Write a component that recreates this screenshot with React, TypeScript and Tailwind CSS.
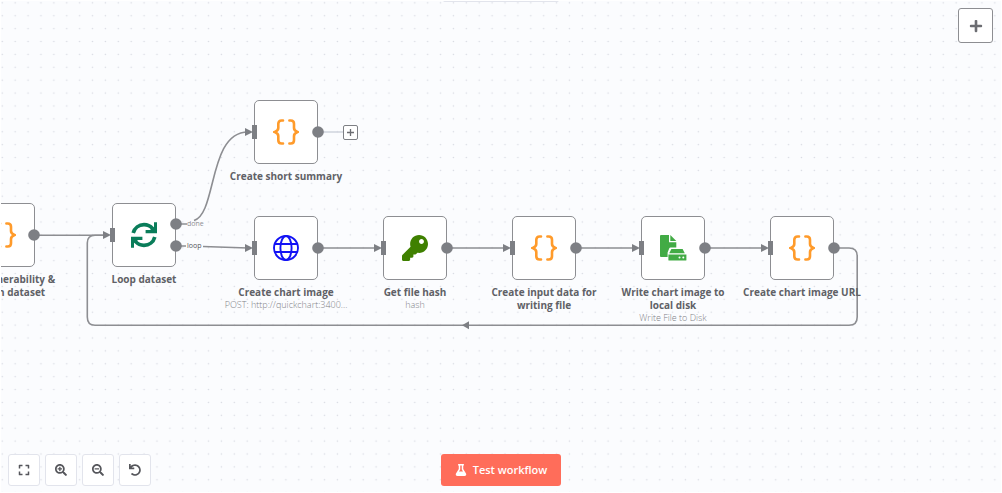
import type { ReactNode } from 'react';
import { FaExpand, FaFlask, FaKey, FaPlus, FaSearchMinus, FaSearchPlus, FaUndo } from 'react-icons/fa';

function BracesIcon() {
  return (
    <svg className="size-[26px]" viewBox="0 0 26 26" fill="none" stroke="#ff9b2b" strokeWidth="2.6" strokeLinecap="round" aria-hidden="true">
      <path d="M10 1.5H8.6Q5.3 1.5 5.3 4.8V9Q5.3 11.6 1.8 13Q5.3 14.4 5.3 17V21.2Q5.3 24.5 8.6 24.5H10" />
      <path d="M16.4 1.5H17.8Q21 1.5 21 4.8V9Q21 11.6 24.5 13Q21 14.4 21 17V21.2Q21 24.5 17.8 24.5H16.4" />
    </svg>
  );
}

function LoopIcon() {
  return (
    <svg className="size-[26px]" viewBox="0 0 26 26" fill="none" aria-hidden="true">
      <g stroke="#0a7d5a" strokeWidth="3.7">
        <path d="M2.2 11C3.6 5.8 7.9 2.7 13 2.7C16.6 2.7 19.4 4.1 21.6 6.6" />
        <path d="M23.8 15C22.4 20.2 18.1 23.3 13 23.3C9.4 23.3 6.6 21.9 4.4 19.4" />
      </g>
      <g fill="#0a7d5a">
        <path d="M23 0.2H26V11.2H14.6V8H19L23 4.8Z" />
        <path d="M3 25.8H0V14.8H11.4V18H7L3 21.2Z" />
      </g>
    </svg>
  );
}

function GlobeIcon() {
  return (
    <svg className="size-[26px]" viewBox="0 0 26 26" fill="none" stroke="#1212f5" strokeWidth="1.9" aria-hidden="true">
      <circle cx="13" cy="13" r="12" />
      <ellipse cx="13" cy="13" rx="5.6" ry="12" />
      <path d="M1.5 9H24.5M1.5 17H24.5" />
    </svg>
  );
}

function WriteFileIcon() {
  return (
    <svg className="h-[26px] w-[27px]" viewBox="0 0 27 26" fill="#42ab45" aria-hidden="true">
      <path d="M1 0H9V7.3H16.3V12.6H10.6Q9.6 12.6 9.2 13.5L7.6 17.6V22H1Q0 22 0 21V1Q0 0 1 0Z" />
      <path d="M10.3 0L16.3 6H10.3Z" />
      <path d="M11.4 14H22.6L24.8 18.3H9.2Z" />
      <path fillRule="evenodd" d="M8.4 19.6H26.4V25Q26.4 25.6 25.8 25.6H9Q8.4 25.6 8.4 25ZM19.5 21.6A1 1 0 1 0 19.5 23.6A1 1 0 1 0 19.5 21.6ZM23.3 21.6A1 1 0 1 0 23.3 23.6A1 1 0 1 0 23.3 21.6Z" />
    </svg>
  );
}

type WorkflowNode = {
  id: string;
  place: string;
  lines: string[];
  note?: string;
  icon: ReactNode;
};

const nodes: WorkflowNode[] = [
  { id: 'vulnerability', place: 'left-[-62px] top-[203px]', lines: ['Parse vulnerability &', 'common dataset'], icon: <BracesIcon /> },
  { id: 'loop', place: 'left-[79px] top-[203px]', lines: ['Loop dataset'], icon: <LoopIcon /> },
  { id: 'summary', place: 'left-[221px] top-[100px]', lines: ['Create short summary'], icon: <BracesIcon /> },
  { id: 'chart', place: 'left-[221px] top-[216px]', lines: ['Create chart image'], note: 'POST: http://quickchart:3400...', icon: <GlobeIcon /> },
  { id: 'hash', place: 'left-[350px] top-[216px]', lines: ['Get file hash'], note: 'hash', icon: <FaKey className="size-[26px] text-[#3f8000]" /> },
  { id: 'input', place: 'left-[479px] top-[216px]', lines: ['Create input data for', 'writing file'], icon: <BracesIcon /> },
  { id: 'write', place: 'left-[608px] top-[216px]', lines: ['Write chart image to', 'local disk'], note: 'Write File to Disk', icon: <WriteFileIcon /> },
  { id: 'url', place: 'left-[737px] top-[216px]', lines: ['Create chart image URL'], icon: <BracesIcon /> },
];

const inputs = [[112, 235], [254, 132], [254, 248], [383, 248], [512, 248], [641, 248], [770, 248]];
const outputs = [[34, 235], [176, 224], [176, 246], [318, 132], [318, 248], [447, 248], [576, 248], [705, 248], [834, 248]];

function Grid() {
  return (
    <svg className="absolute inset-0 size-full" aria-hidden="true">
      <defs>
        <pattern id="dots" x="-5.1" y="-4.6" width="12.89" height="12.89" patternUnits="userSpaceOnUse">
          <circle cx="6.4" cy="6.4" r="0.8" fill="#d9dbe3" />
        </pattern>
      </defs>
      <rect width="100%" height="100%" fill="url(#dots)" />
    </svg>
  );
}

function Edges() {
  return (
    <svg className="pointer-events-none absolute inset-0 size-full" fill="none" stroke="#8d8e92" strokeWidth="1.6" aria-hidden="true">
      <path d="M34 235.3H108" />
      <path d="M176 224H187M194 220.5C217 214 208 132 248 132" />
      <path d="M176 246H186M203 246.5L248 248" />
      <path d="M318 248H379M447 248H508M576 248H637M705 248H766" />
      <path d="M834 248H849Q857.2 248 857.2 256V317Q857.2 325.3 849 325.3H95Q87.3 325.3 87.3 317V243Q87.3 235.3 95 235.3H108" />
      <path d="M318 132H343" stroke="#d3d6df" />
      <path d="M469 321.3V329.3L462 325.3Z" fill="#7d7f84" stroke="none" />
    </svg>
  );
}

function Ports() {
  return (
    <svg className="pointer-events-none absolute inset-0 size-full" fill="#7d7f84" aria-hidden="true">
      {inputs.map(([x, y]) => (
        <g key={`${x}-${y}`}>
          <rect x={x - 2} y={y - 7} width="5" height="14" />
          <path d={`M${x - 9} ${y - 4}V${y + 4}L${x - 1} ${y}Z`} />
        </g>
      ))}
      {outputs.map(([x, y]) => (
        <circle key={`${x}-${y}`} cx={x} cy={y} r="5.8" />
      ))}
    </svg>
  );
}

function NodeCard({ node }: { node: WorkflowNode }) {
  return (
    <article className={`absolute flex w-[130px] flex-col items-center text-center ${node.place}`}>
      <div className="flex size-16 items-center justify-center rounded-[5px] border border-[#8d8e92] bg-white">{node.icon}</div>
      <h2 className="mt-[6px] text-[10px] leading-[13px] font-bold whitespace-nowrap text-[#606166]">
        {node.lines.map((line) => (
          <span key={line} className="block">{line}</span>
        ))}
      </h2>
      {node.note && <p className="text-[9px] leading-3 font-light whitespace-nowrap text-[#808186]">{node.note}</p>}
    </article>
  );
}

const tools = [
  { label: 'Fit to view', icon: <FaExpand className="size-3" /> },
  { label: 'Zoom in', icon: <FaSearchPlus className="size-3" /> },
  { label: 'Zoom out', icon: <FaSearchMinus className="size-3" /> },
  { label: 'Reset zoom', icon: <FaUndo className="size-3" /> },
];

export default function App() {
  return (
    <div className="min-h-screen bg-white font-['Open_Sans',sans-serif]">
      <main className="relative flex min-h-screen flex-col justify-between overflow-hidden border border-white bg-[#fbfcfe] bg-clip-padding">
        <Grid />
        <div className="absolute -top-px -left-px size-full">
          <Edges />
          {nodes.map((node) => (
            <NodeCard key={node.id} node={node} />
          ))}
          <Ports />
          <span className="absolute top-[219px] left-[187px] text-[7px] leading-[9px] text-[#8d8e92]">done</span>
          <span className="absolute top-[241px] left-[187px] text-[7px] leading-[9px] text-[#55565b]">loop</span>
          <button type="button" aria-label="Add node after Create short summary" className="absolute top-[125px] left-[343px] flex size-[15px] items-center justify-center rounded-[2px] border border-[#7d7f84] bg-white text-[#6c6d72]">
            <svg className="size-[7px]" viewBox="0 0 7 7" stroke="currentColor" strokeWidth="1.3" aria-hidden="true">
              <path d="M3.5 0V7M0 3.5H7" />
            </svg>
          </button>
        </div>
        <div className="relative flex justify-end pt-[7px] pr-2">
          <div className="absolute -top-px left-1/2 h-[2px] w-[116px] -translate-x-1/2 rounded-b-sm bg-[#e2e4ec]" />
          <button type="button" aria-label="Add node" className="flex size-[35px] items-center justify-center rounded-[3px] border border-[#8d8e92] bg-white text-[#6c6d72]">
            <FaPlus className="size-[14px]" />
          </button>
        </div>
        <footer className="relative grid grid-cols-[1fr_auto_1fr] items-center px-[7px] pb-[6px]">
          <div className="flex gap-[5px]">
            {tools.map((tool) => (
              <button key={tool.label} type="button" aria-label={tool.label} className="flex size-8 items-center justify-center rounded-[3px] border border-[#e2e4ec] bg-white text-[#55565b]">
                {tool.icon}
              </button>
            ))}
          </div>
          <button type="button" className="flex h-8 items-center gap-[6px] rounded-[3px] bg-[#ff6d5a] px-[14px] text-[11px] font-semibold text-white">
            <FaFlask className="size-3" />
            Test workflow
          </button>
        </footer>
      </main>
    </div>
  );
}
